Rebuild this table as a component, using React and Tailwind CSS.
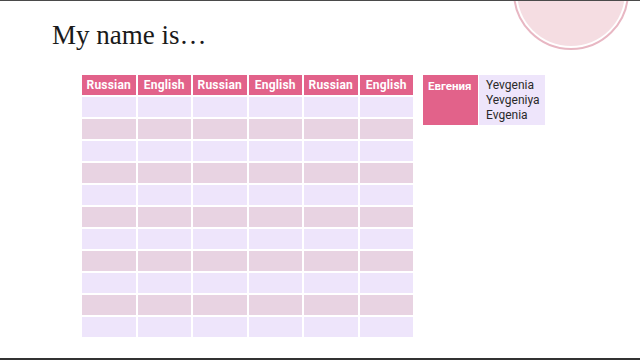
export default function App() {
  const cols = ['Russian', 'English', 'Russian', 'English', 'Russian', 'English'];
  const rows = Array.from({ length: 11 }, (_, i) => i);

  return (
    <div className="relative w-[640px] h-[360px] overflow-hidden bg-white border-t border-t-[#4a4a4a] border-b-2 border-b-[#333333]">
      {/* decorative circle in the corner */}
      <div className="absolute left-[513px] top-[-67px] w-[116px] h-[116px] rounded-full border-2 border-[#e8b7c3] p-[2px]">
        <div className="w-full h-full rounded-full bg-[#f5dde2]" />
      </div>

      <h1 className="pl-[52px] pt-[21px] h-[74px] text-[27px] leading-none text-[#1a1a1a]" style={{ fontFamily: '"Liberation Serif", serif' }}>
        My name is…
      </h1>

      <div className="flex items-start gap-[10px] pl-[82px]" style={{ fontFamily: 'Roboto, sans-serif' }}>
        {/* name table */}
        <div className="grid grid-cols-6 gap-[2px] w-[331px]">
          {cols.map((c, i) => (
            <div key={i} className="h-[20px] bg-[#e2628a] text-white font-bold text-[12px] tracking-[0.2px] flex items-center justify-center">
              {c}
            </div>
          ))}
          {rows.map((r) =>
            cols.map((_, i) => (
              <div key={`${r}-${i}`} className={`h-[20px] ${r % 2 === 0 ? 'bg-[#eee5fb]' : 'bg-[#e8d3e2]'}`} />
            ))
          )}
        </div>

        {/* example name */}
        <div className="flex gap-[1px] h-[50px]">
          <div className="w-[55px] bg-[#e2628a] text-white font-bold text-[11.5px] leading-[15px] pt-[4px] pl-[5px]">
            Евгения
          </div>
          <div className="w-[66px] bg-[#eee5fb] text-[#2a2a2a] text-[12px] leading-[15px] pt-[3px] pl-[7px]">
            <div>Yevgenia</div>
            <div>Yevgeniya</div>
            <div>Evgenia</div>
          </div>
        </div>
      </div>
    </div>
  );
}
